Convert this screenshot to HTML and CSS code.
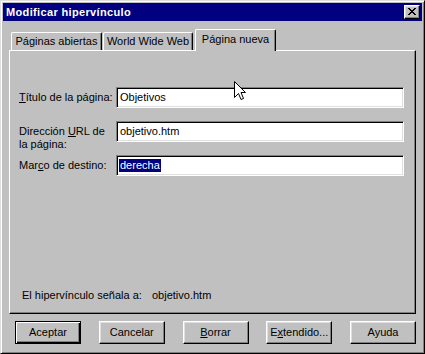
FILE: index.html
```html
<!DOCTYPE html>
<html lang="es">
<head>
<meta charset="utf-8">
<title>Modificar hipervínculo</title>
<link rel="stylesheet" href="styles.css">
</head>
<body>
<div class="window">
  <div class="titlebar">
    <span class="title">Modificar hipervínculo</span>
    <span class="close">
      <svg width="8" height="7" viewBox="0 0 8 7" shape-rendering="crispEdges">
        <path d="M0 0h2v1H0zM6 0h2v1H6zM1 1h2v1H1zM5 1h2v1H5zM2 2h4v1H2zM3 3h2v1H3zM2 4h4v1H2zM1 5h2v1H1zM5 5h2v1H5zM0 6h2v1H0zM6 6h2v1H6z" fill="#000"/>
      </svg>
    </span>
  </div>
  <div class="body">
    <div class="tabs">
      <div class="tab tab-1">Páginas abiertas</div>
      <div class="tab tab-2">World Wide Web</div>
      <div class="tab tab-active">Página nueva</div>
    </div>
    <div class="panel">
      <div class="form">
        <div class="lbl"><u>T</u>ítulo de la página:</div>
        <div class="field">Objetivos</div>
        <div class="lbl lbl-top">Dirección <u>U</u>RL de<br>la página:</div>
        <div class="field">objetivo.htm</div>
        <div class="lbl">Mar<u>c</u>o de destino:</div>
        <div class="field"><span class="sel">derecha</span></div>
      </div>
      <div class="info">
        <span class="info-label">El hipervínculo señala a:</span>
        <span>objetivo.htm</span>
      </div>
    </div>
    <div class="buttons">
      <div class="btn btn-default">Aceptar</div>
      <div class="btn">Cancelar</div>
      <div class="btn"><u>B</u>orrar</div>
      <div class="btn">E<u>x</u>tendido...</div>
      <div class="btn">Ayuda</div>
    </div>
  </div>
  <svg class="cursor" width="13" height="20" viewBox="0 0 13 20">
    <path d="M0.5 0.5 L0.5 16.5 L4.5 12.5 L7 18.5 L9.5 17.5 L7 11.5 L11.5 11.5 Z" fill="#fff" stroke="#000" stroke-width="1" stroke-linejoin="miter"/>
  </svg>
</div>
</body>
</html>
```

FILE: styles.css
```css
* { box-sizing: border-box; }

html, body {
  margin: 0;
  padding: 0;
  background: #c0c0c0;
}

body {
  font-family: "Liberation Sans", Arial, sans-serif;
  font-size: 11px;
  color: #000;
}

u { text-decoration: underline; text-underline-offset: 1px; }

.window {
  position: relative;
  width: 425px;
  height: 354px;
  background: #c0c0c0;
  border: 1px solid;
  border-color: #dfdfdf #000 #000 #dfdfdf;
  box-shadow: inset 1px 1px #fff, inset -1px -1px #808080;
  padding: 2px;
  display: flex;
  flex-direction: column;
}

.titlebar {
  height: 18px;
  background: #000080;
  color: #fff;
  display: flex;
  align-items: center;
  padding: 0 2px 0 3px;
}

.title {
  flex: 1;
  font-weight: bold;
  font-size: 11px;
  letter-spacing: 0.35px;
}

.close {
  width: 16px;
  height: 14px;
  background: #c0c0c0;
  border: 1px solid;
  border-color: #fff #000 #000 #fff;
  box-shadow: inset -1px -1px #808080, inset 1px 1px #dfdfdf;
  display: flex;
  align-items: center;
  justify-content: center;
  padding: 0 1px 1px 0;
}

.close svg { display: block; }

.body {
  padding: 8px 6px 0 6px;
  display: flex;
  flex-direction: column;
}

.tabs {
  display: flex;
  align-items: flex-end;
  height: 21px;
}

.tab {
  height: 18px;
  border-top: 1px solid #fff;
  border-left: 1px solid #fff;
  border-right: 1px solid #000;
  border-radius: 2px 2px 0 0;
  box-shadow: inset -1px 0 #808080;
  background: #c0c0c0;
  display: flex;
  align-items: center;
  justify-content: center;
  padding-bottom: 1px;
  white-space: nowrap;
}

.tab-1 { margin-left: 2px; width: 91px; }
.tab-2 { margin-left: 1px; width: 90px; }

.tab-active {
  margin-left: 2px;
  width: 81px;
  height: 22px;
  margin-bottom: -1px;
  position: relative;
  z-index: 1;
  padding-bottom: 4px;
}

.panel {
  height: 264px;
  border: 1px solid;
  border-color: #fff #000 #000 #fff;
  box-shadow: inset -1px -1px #808080;
  padding: 36px 0 11px 9px;
  display: flex;
  flex-direction: column;
}

.form {
  display: grid;
  grid-template-columns: 97px 288px;
  grid-template-rows: 21px 21px 21px;
  row-gap: 13px;
  align-items: center;
}

.lbl {
  line-height: 13px;
  white-space: nowrap;
}

.lbl-top {
  align-self: start;
  padding-top: 4px;
}

.field {
  height: 21px;
  background: #fff;
  border: 1px solid;
  border-color: #808080 #fff #fff #808080;
  box-shadow: inset 1px 1px #000, inset -1px -1px #dfdfdf;
  padding: 0 0 0 3px;
  line-height: 19px;
  white-space: nowrap;
}

.sel {
  display: inline-block;
  background: #000080;
  color: #fff;
  line-height: 13px;
  padding: 0 1px;
  margin-left: -1px;
  vertical-align: middle;
  position: relative;
  top: -1px;
}

.info {
  margin-top: auto;
  padding-left: 3px;
  line-height: 13px;
  display: flex;
}

.info-label { width: 130px; }

.buttons {
  margin-top: 7px;
  padding-left: 6px;
  display: flex;
  justify-content: space-between;
}

.btn {
  width: 66px;
  height: 23px;
  border: 1px solid;
  border-color: #fff #000 #000 #fff;
  box-shadow: inset -1px -1px #808080, inset 1px 1px #dfdfdf;
  display: flex;
  align-items: center;
  justify-content: center;
  padding-bottom: 1px;
}

.btn-default {
  border-color: #000;
  box-shadow: inset 1px 1px #fff, inset -1px -1px #000, inset -2px -2px #808080;
}

.cursor {
  position: absolute;
  left: 233px;
  top: 80px;
  display: block;
}
```
